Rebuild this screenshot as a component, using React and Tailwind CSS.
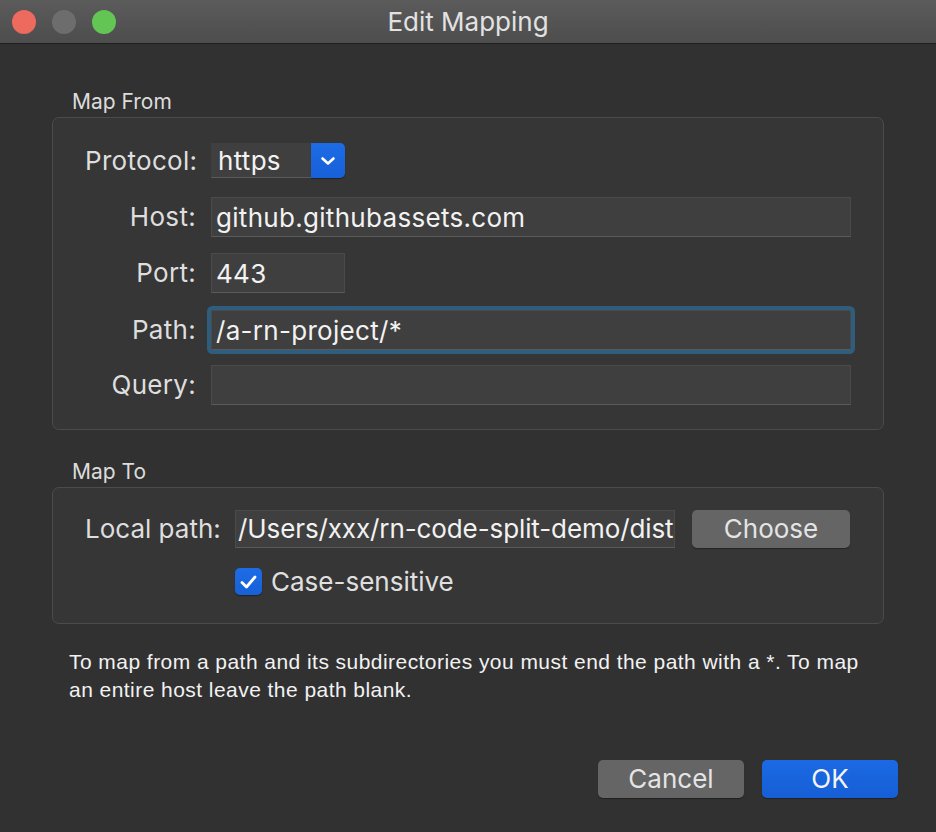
import React from 'react';

const font = "font-['Inter','Liberation_Sans',sans-serif]";

function TextField({ value, className = '', focused = false }) {
  return (
    <div
      className={`h-[40px] bg-[#3f3f3f] border border-[#4a4a4a] border-b-[#5a5a5a] flex items-center px-[4px] text-[26px] tracking-[0.3px] text-[#f2f2f2] whitespace-nowrap overflow-hidden ${
        focused ? 'rounded-[2px] shadow-[0_0_0_4px_#2f5d7d]' : ''
      } ${className}`}
    >
      {value}
    </div>
  );
}

function Label({ children }) {
  return <div className="text-right text-[26px] tracking-[0.3px] text-[#dedede] leading-none whitespace-nowrap">{children}</div>;
}

function Button({ children, primary = false, className = '' }) {
  return (
    <button
      className={`h-[38px] rounded-[5px] text-[26px] leading-none flex items-center justify-center shadow-[0_1px_1px_rgba(0,0,0,0.35)] ${
        primary
          ? 'bg-gradient-to-b from-[#1b6ae4] to-[#165ed6] text-[#f4f4f4]'
          : 'bg-[#656565] text-[#e4e4e4]'
      } ${className}`}
    >
      {children}
    </button>
  );
}

export default function App() {
  return (
    <div className={`w-[936px] h-[832px] bg-[#313131] flex flex-col ${font}`}>
      {/* Title bar */}
      <div className="h-[44px] shrink-0 relative flex items-center bg-gradient-to-b from-[#5b5b5b] to-[#4d4d4d] border-b border-[#1e1e1e]">
        <div className="flex items-center gap-[16px] pl-[12px]">
          <span className="w-[24px] h-[24px] rounded-full bg-[#ed6a5e]" />
          <span className="w-[24px] h-[24px] rounded-full bg-[#6d6d6d]" />
          <span className="w-[24px] h-[24px] rounded-full bg-[#62c554]" />
        </div>
        <div className="absolute inset-0 flex items-center justify-center text-[26px] text-[#e2e2e2]">
          Edit Mapping
        </div>
      </div>

      <div className="px-[52px] flex flex-col">
        {/* Map From */}
        <div className="mt-[46px] pl-[20px] text-[21px] leading-[24px] text-[#dcdcdc]">Map From</div>
        <div className="mt-[3px] h-[313px] rounded-[7px] border border-[#4b4b4b] bg-[#363636] pl-[32px] pr-[32px] pt-[25px] grid grid-cols-[111px_1fr] gap-x-[15px] items-center content-start">
          <Label>Protocol:</Label>
          <div className="flex h-[35px] w-[134px]">
            <div className="flex-1 bg-[#3f3f3f] border-b border-[#5a5a5a] flex items-center pl-[7px] text-[26px] tracking-[0.3px] text-[#f2f2f2]">
              https
            </div>
            <div className="w-[34px] rounded-r-[5px] bg-gradient-to-b from-[#1d6ce6] to-[#1760d8] flex items-center justify-center shadow-[0_1px_1px_rgba(0,0,0,0.4)]">
              <svg width="16" height="10" viewBox="0 0 16 10" fill="none">
                <path d="M2.5 2.5 L8 7.5 L13.5 2.5" stroke="#ffffff" strokeWidth="2.6" strokeLinecap="round" strokeLinejoin="round" />
              </svg>
            </div>
          </div>

          <div className="mt-[19px]"><Label>Host:</Label></div>
          <TextField value="github.githubassets.com" className="mt-[19px]" />

          <div className="mt-[16px]"><Label>Port:</Label></div>
          <TextField value="443" className="mt-[16px] w-[134px]" />

          <div className="mt-[17px]"><Label>Path:</Label></div>
          <TextField value="/a-rn-project/*" focused className="mt-[17px]" />

          <div className="mt-[15px]"><Label>Query:</Label></div>
          <TextField value="" className="mt-[15px]" />
        </div>

        {/* Map To */}
        <div className="mt-[30px] pl-[20px] text-[21px] leading-[24px] text-[#dcdcdc]">Map To</div>
        <div className="mt-[3px] h-[137px] rounded-[7px] border border-[#4b4b4b] bg-[#363636] pl-[32px] pr-[33px] pt-[21px] flex flex-col">
          <div className="flex items-center">
            <div className="w-[134px] text-[26px] text-[#dedede] whitespace-nowrap">Local path:</div>
            <TextField value="/Users/xxx/rn-code-split-demo/dist" className="ml-[16px] w-[440px] !h-[38px] !px-[2px] !tracking-[-0.1px]" />
            <Button className="ml-[17px] w-[158px]">Choose</Button>
          </div>
          <div className="flex items-center mt-[14px] ml-[150px]">
            <div className="w-[27px] h-[27px] rounded-[5px] bg-gradient-to-b from-[#1d6ce6] to-[#1760d8] flex items-center justify-center shadow-[0_1px_1px_rgba(0,0,0,0.4)]">
              <svg width="19" height="16" viewBox="0 0 19 16" fill="none">
                <path d="M3 8.5 L7.5 13 L16 3" stroke="#ffffff" strokeWidth="2.8" strokeLinecap="round" strokeLinejoin="round" />
              </svg>
            </div>
            <span className="ml-[9px] text-[26px] text-[#e0e0e0]">Case-sensitive</span>
          </div>
        </div>

        {/* Help */}
        <div className="mt-[24px] pl-[17px] font-['Liberation_Sans',sans-serif] text-[21px] leading-[28px] text-[#f2f2f2] tracking-[0.45px]">
          <div className="whitespace-nowrap">
            To map from a path and its subdirectories you must end the path with a *. To map
          </div>
          <div className="whitespace-nowrap">an entire host leave the path blank.</div>
        </div>
      </div>

      {/* Buttons */}
      <div className="mt-auto mb-[34px] mr-[38px] flex justify-end gap-[18px]">
        <Button className="w-[146px]">Cancel</Button>
        <Button primary className="w-[136px]">OK</Button>
      </div>
    </div>
  );
}
